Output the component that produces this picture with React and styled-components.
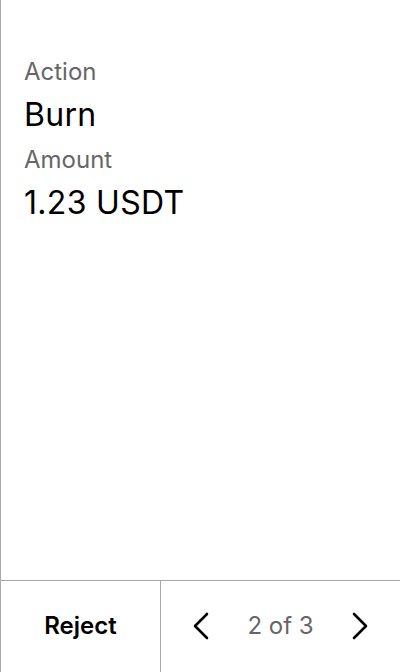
import styled, { createGlobalStyle } from "styled-components";

const GlobalStyle = createGlobalStyle`
    html, body { margin: 0; padding: 0; background: #fff; }
    body { font-family: Inter, "Noto Sans", sans-serif; }
`;

/* Styled components */

const Page = styled.div`
    width: 400px;
    height: 672px;
    box-sizing: border-box;
    border-left: 1px solid #a8a8a8;
    display: flex;
    flex-direction: column;
`;

const Details = styled.div`
    flex: 1;
    padding: 53px 23px 0;
    display: flex;
    flex-direction: column;
`;

const Label = styled.div`
    font-size: 24px;
    line-height: 38px;
    color: #666;
`;

const Value = styled.div`
    font-size: 32px;
    line-height: 48px;
    letter-spacing: 0.3px;
    color: #000;
    margin-bottom: 2px;
`;

const Footer = styled.div`
    height: 92px;
    box-sizing: border-box;
    border-top: 1px solid #a8a8a8;
    display: flex;
`;

const RejectButton = styled.button`
    width: 160px;
    border: none;
    border-right: 1px solid #a8a8a8;
    background: transparent;
    font-family: inherit;
    font-size: 24px;
    font-weight: 600;
    color: #000;
    padding: 0 0 2px;
`;

const Pager = styled.div`
    flex: 1;
    display: flex;
    align-items: center;
    justify-content: space-between;
    padding: 0 32px 2px;
`;

const Arrow = styled.button`
    border: none;
    background: transparent;
    padding: 0;
    display: flex;
    align-items: center;
    justify-content: center;
`;

const PageText = styled.span`
    font-size: 24px;
    color: #666;
`;

const Chevron = ({ dir }) => (
    <svg width="16" height="28" viewBox="0 0 16 28" fill="none" stroke="#000" strokeWidth="2.6" strokeLinecap="round" strokeLinejoin="round">
        {dir === "left" ? <path d="M14 2 L2 14 L14 26" /> : <path d="M2 2 L14 14 L2 26" />}
    </svg>
);

const App = () => {
    return (
        <>
            <GlobalStyle />
            <Page>
                <Details>
                    <Label>Action</Label>
                    <Value>Burn</Value>
                    <Label>Amount</Label>
                    <Value>1.23 USDT</Value>
                </Details>
                <Footer>
                    <RejectButton>Reject</RejectButton>
                    <Pager>
                        <Arrow><Chevron dir="left" /></Arrow>
                        <PageText>2 of 3</PageText>
                        <Arrow><Chevron dir="right" /></Arrow>
                    </Pager>
                </Footer>
            </Page>
        </>
    );
};

export default App;
